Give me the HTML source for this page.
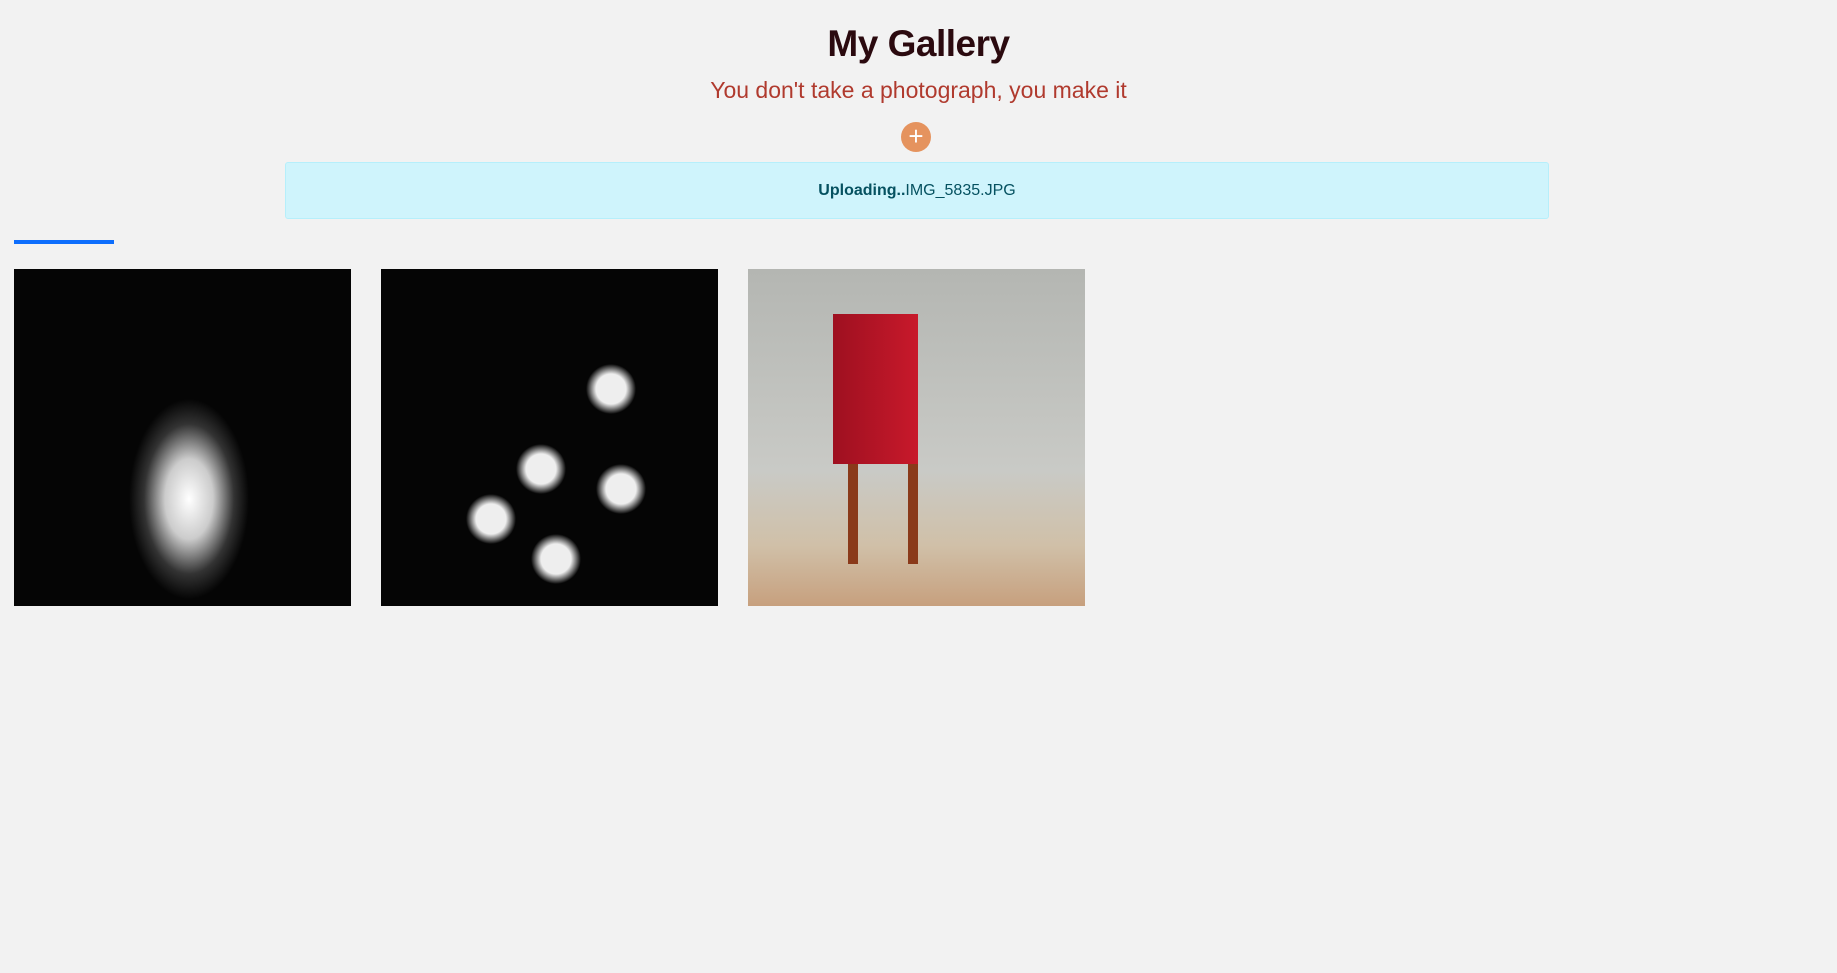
<!DOCTYPE html>
<html><head><meta charset="utf-8"><style>
body{margin:0;background:#f2f2f2;width:1837px;height:973px;overflow:hidden;font-family:"Liberation Sans",sans-serif;position:relative}
h1{position:absolute;top:23px;left:0;width:100%;text-align:center;margin:0;font-size:37px;letter-spacing:-0.5px;color:#2b0a0f;font-weight:bold}
.sub{position:absolute;top:77px;left:0;width:100%;text-align:center;font-size:23px;color:#b03a2e}
.plus{position:absolute;left:901px;top:122px;width:30px;height:30px;border-radius:50%;background:#e5935e;color:#fff;text-align:center;line-height:29px;font-size:26px}
.alert{position:absolute;left:285px;top:162px;width:1262px;height:55px;background:#cff4fc;border:1px solid #b6effb;border-radius:3px;color:#055160;font-size:16px;text-align:center;line-height:55px}
.bar{position:absolute;left:14px;top:240px;width:100px;height:4px;background:#0d6efd}
.img{position:absolute;top:269px;width:337px;height:337px}
</style></head><body>
<h1>My Gallery</h1>
<div class="sub">You don't take a photograph, you make it</div>
<div class="plus">+</div>
<div class="alert"><b>Uploading..</b>IMG_5835.JPG</div>
<div class="bar"></div>
<div class="img" style="left:14px;background:radial-gradient(ellipse 60px 100px at 175px 230px,#fff 0%,#ccc 40%,#333 75%,#050505 100%),#050505"></div>
<div class="img" style="left:381px;background:radial-gradient(circle at 230px 120px,#eee 0 15px,transparent 25px),radial-gradient(circle at 160px 200px,#eee 0 15px,transparent 25px),radial-gradient(circle at 240px 220px,#eee 0 15px,transparent 25px),radial-gradient(circle at 110px 250px,#eee 0 15px,transparent 25px),radial-gradient(circle at 175px 290px,#eee 0 15px,transparent 25px),#050505"></div>
<div class="img" style="left:748px;background:linear-gradient(90deg,transparent 85px,#9e1020 85px,#c8192b 170px,transparent 170px) 0 45px/100% 150px no-repeat,linear-gradient(90deg,transparent 100px,#8a3a1a 100px,#8a3a1a 110px,transparent 110px,transparent 160px,#8a3a1a 160px,#8a3a1a 170px,transparent 170px) 0 195px/100% 100px no-repeat,linear-gradient(180deg,#b4b6b2 0%,#c9cac6 60%,#d0c0a8 82%,#c7a07e 100%)"></div>
</body></html>
